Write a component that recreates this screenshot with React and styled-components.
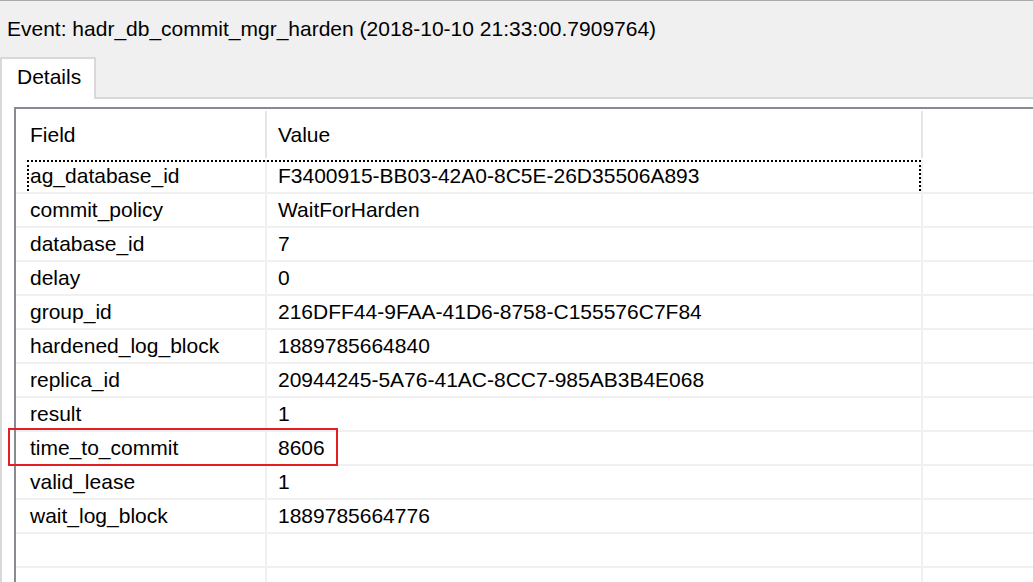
import React from "react";
import styled, { createGlobalStyle } from "styled-components";

const GlobalStyle = createGlobalStyle`
  html, body {
    margin: 0;
    padding: 0;
    background: #f0f0f0;
  }
  body {
    font-family: "Liberation Sans", Arial, sans-serif;
    font-size: 21px;
    color: #000;
  }
`;

const Window = styled.div`
  width: 1033px;
  height: 582px;
  overflow: hidden;
  box-sizing: border-box;
  border-top: 1px solid #ababab;
  background: #f0f0f0;
  display: flex;
  flex-direction: column;
`;

const Title = styled.div`
  height: 56px;
  line-height: 56px;
  padding-left: 7px;
  white-space: nowrap;
  flex: none;
`;

const TabStrip = styled.div`
  display: flex;
  align-items: flex-end;
  height: 42px;
  flex: none;
`;

const Tab = styled.div`
  box-sizing: border-box;
  width: 96px;
  height: 42px;
  border: 2px solid #d9d9d9;
  border-bottom: none;
  background: #fff;
  padding-left: 15px;
  line-height: 36px;
`;

const TabLine = styled.div`
  flex: 1;
  align-self: stretch;
  border-bottom: 2px solid #d9d9d9;
`;

const Page = styled.div`
  flex: 1;
  background: #fff;
  border-left: 2px solid #d9d9d9;
  padding: 8px 0 0 12px;
  display: flex;
`;

const Grid = styled.div`
  flex: 1;
  background: #fff;
  border-top: 2px solid #878a91;
  border-left: 2px solid #878a91;
`;

const HeaderRow = styled.div`
  display: grid;
  grid-template-columns: 251px 656px 1fr;
  height: 51px;
`;

const HeaderCell = styled.div`
  box-sizing: border-box;
  border-right: 2px solid #e5e5e5;
  margin-top: 2px;
  height: 47px;
  padding: 8px 0 0 ${(p) => p.$pad}px;
  line-height: 32px;
  &:last-child {
    border-right: none;
  }
`;

const Row = styled.div`
  position: relative;
  display: grid;
  grid-template-columns: 251px 656px 1fr;
  height: 34px;
  box-sizing: border-box;
  border-bottom: 2px solid #f0f0f0;

  ${(p) =>
    p.$focused &&
    `
    &::before {
      content: "";
      position: absolute;
      left: 11px;
      top: 0;
      width: 894px;
      height: 31px;
      box-sizing: border-box;
      border: 2px dotted #000;
      border-bottom: none;
      pointer-events: none;
    }
  `}

  ${(p) =>
    p.$highlight &&
    `
    &::after {
      content: "";
      position: absolute;
      left: -8px;
      top: -4px;
      width: 330px;
      height: 38px;
      box-sizing: border-box;
      border: 2px solid #e31e24;
      pointer-events: none;
    }
  `}
`;

const Cell = styled.div`
  box-sizing: border-box;
  border-right: 2px solid #f0f0f0;
  padding-left: ${(p) => p.$pad}px;
  line-height: 32px;
  white-space: nowrap;
  &:last-child {
    border-right: none;
  }
`;

const fields = [
  ["ag_database_id", "F3400915-BB03-42A0-8C5E-26D35506A893"],
  ["commit_policy", "WaitForHarden"],
  ["database_id", "7"],
  ["delay", "0"],
  ["group_id", "216DFF44-9FAA-41D6-8758-C155576C7F84"],
  ["hardened_log_block", "1889785664840"],
  ["replica_id", "20944245-5A76-41AC-8CC7-985AB3B4E068"],
  ["result", "1"],
  ["time_to_commit", "8606"],
  ["valid_lease", "1"],
  ["wait_log_block", "1889785664776"],
  ["", ""],
  ["", ""],
];

export default function App() {
  return (
    <>
      <GlobalStyle />
      <Window>
        <Title>Event: hadr_db_commit_mgr_harden (2018-10-10 21:33:00.7909764)</Title>
        <TabStrip>
          <Tab>Details</Tab>
          <TabLine />
        </TabStrip>
        <Page>
          <Grid>
            <HeaderRow>
              <HeaderCell $pad={14}>Field</HeaderCell>
              <HeaderCell $pad={11}>Value</HeaderCell>
              <HeaderCell $pad={0} />
            </HeaderRow>
            {fields.map(([name, value], i) => (
              <Row
                key={i}
                $focused={i === 0}
                $highlight={name === "time_to_commit"}
              >
                <Cell $pad={14}>{name}</Cell>
                <Cell $pad={11}>{value}</Cell>
                <Cell $pad={0} />
              </Row>
            ))}
          </Grid>
        </Page>
      </Window>
    </>
  );
}
